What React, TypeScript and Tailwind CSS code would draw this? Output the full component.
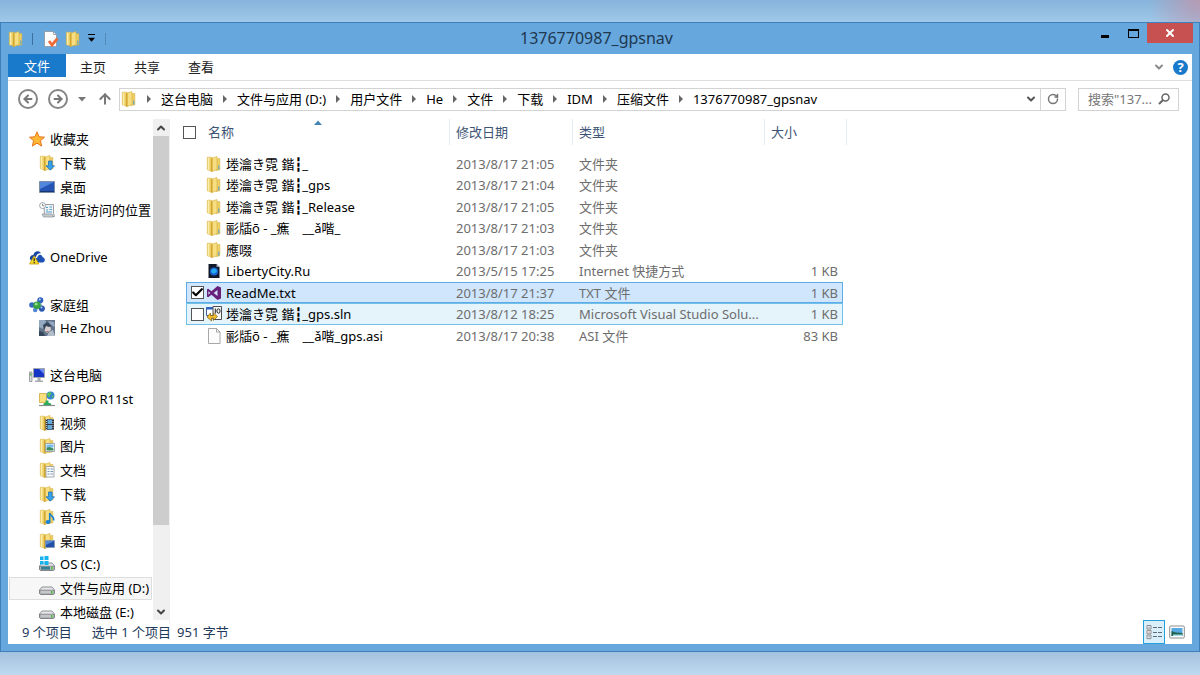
import type { ReactNode } from "react";
import { ArrowLeft, ArrowRight, ArrowUp, Check, ChevronDown, ChevronUp, RotateCw, X } from "lucide-react";

type IconName =
  | "star" | "download" | "desktop" | "recent" | "onedrive" | "homegroup" | "avatar" | "computer" | "phone"
  | "video" | "picture" | "document" | "music" | "desktopFolder" | "osDrive" | "drive" | "folder"
  | "link" | "vs" | "sln" | "file" | "properties";

// null leaves an empty line between groups
const sidebar: ({ label: string; icon: IconName; root?: boolean; active?: boolean } | null)[] = [
  { label: "收藏夹", icon: "star", root: true },
  { label: "下载", icon: "download" },
  { label: "桌面", icon: "desktop" },
  { label: "最近访问的位置", icon: "recent" },
  null,
  { label: "OneDrive", icon: "onedrive", root: true },
  null,
  { label: "家庭组", icon: "homegroup", root: true },
  { label: "He Zhou", icon: "avatar" },
  null,
  { label: "这台电脑", icon: "computer", root: true },
  { label: "OPPO R11st", icon: "phone" },
  { label: "视频", icon: "video" },
  { label: "图片", icon: "picture" },
  { label: "文档", icon: "document" },
  { label: "下载", icon: "download" },
  { label: "音乐", icon: "music" },
  { label: "桌面", icon: "desktopFolder" },
  { label: "OS (C:)", icon: "osDrive" },
  { label: "文件与应用 (D:)", icon: "drive", active: true },
  { label: "本地磁盘 (E:)", icon: "drive" },
];

const files: { name: string; date: string; type: string; size?: string; icon: IconName; state?: "selected" | "hover" }[] = [
  { name: "堘瀹き霓 鍇┇_", date: "2013/8/17 21:05", type: "文件夹", icon: "folder" },
  { name: "堘瀹き霓 鍇┇_gps", date: "2013/8/17 21:04", type: "文件夹", icon: "folder" },
  { name: "堘瀹き霓 鍇┇_Release", date: "2013/8/17 21:05", type: "文件夹", icon: "folder" },
  { name: "彨牐ō - _癄　__ǎ喈_", date: "2013/8/17 21:03", type: "文件夹", icon: "folder" },
  { name: "應啜", date: "2013/8/17 21:03", type: "文件夹", icon: "folder" },
  { name: "LibertyCity.Ru", date: "2013/5/15 17:25", type: "Internet 快捷方式", size: "1 KB", icon: "link" },
  { name: "ReadMe.txt", date: "2013/8/17 21:37", type: "TXT 文件", size: "1 KB", icon: "vs", state: "selected" },
  { name: "堘瀹き霓 鍇┇_gps.sln", date: "2013/8/12 18:25", type: "Microsoft Visual Studio Solu...", size: "1 KB", icon: "sln", state: "hover" },
  { name: "彨牐ō - _癄　__ǎ喈_gps.asi", date: "2013/8/17 20:38", type: "ASI 文件", size: "83 KB", icon: "file" },
];

const crumbs = ["这台电脑", "文件与应用 (D:)", "用户文件", "He", "文件", "下载", "IDM", "压缩文件", "1376770987_gpsnav"];

function FolderShape() {
  return (
    <>
      <path d="M1.3 1.2h4.2l1 1v12l-1.2.6-4-1z" fill="#f4da78" stroke="#d9b548" strokeWidth=".6" />
      <path d="M10 3l3.8-.6v11.4l-3.8.6z" fill="#efce62" stroke="#d5ae3e" strokeWidth=".6" />
      <path d="M5 2.4L11 .5v13.3l-6 1.9z" fill="#f7de82" stroke="#d5ae3e" strokeWidth=".6" />
      <path d="M5 2.4l1.6-.5v13.3L5 15.700z" fill="#d3a630" />
      <path d="M2.5 1.6v12.3" stroke="#fbecb0" />
    </>
  );
}

function DriveShape() {
  return (
    <>
      <path d="M3 7h10l2.5 3v3.5l-1 1h-13l-1-1V10z" fill="#e8e8ea" stroke="#77797d" strokeWidth=".8" />
      <path d="M.8 10.2h14.4v3.2l-.8.8H1.6l-.8-.8z" fill="#c4c6ca" stroke="#696b70" strokeWidth=".7" />
      <path d="M12 11h1.5v2.4H12z" fill="#43c32f" />
    </>
  );
}

const drawings: Record<IconName, ReactNode> = {
  folder: (
    <>
      <FolderShape />
      <path d="M12.8 9.5v4" stroke="#4aa3dd" />
    </>
  ),
  star: <path d="M8 .8l2.1 5 5.4.4-4.1 3.5 1.3 5.4L8 12.2l-4.7 2.9 1.3-5.4L.5 6.2l5.4-.4z" fill="#fdb935" stroke="#e8731c" />,
  download: (
    <>
      <FolderShape />
      <path d="M9.5 6h3.6v4.8h2.4l-4.2 4.4L7 10.8h2.5z" fill="#37a3ec" stroke="#1568ae" strokeWidth=".7" />
    </>
  ),
  desktop: (
    <>
      <path d="M.5 2.5h15v11H.5z" fill="#2554b5" stroke="#7c8eaa" />
      <path d="M1 3h14L1 10z" fill="#5286dc" />
      <path d="M1 12.5h14" stroke="#17356f" />
    </>
  ),
  recent: (
    <>
      <path d="M5 2.5h9.5v8.5l1 3.5H5.5z" fill="#f0f2f4" stroke="#83898f" strokeWidth=".8" />
      <path d="M3 12h10l1.5 3h-10z" fill="#c5ccd2" stroke="#7e858b" strokeWidth=".6" />
      <path d="M7 5.5h2M7 8h2M10.5 5h2.5M10.5 7.5h2.5M7 10h6" stroke="#4ba0cf" />
      <circle cx="3.6" cy="3.6" r="3" fill="#fff" stroke="#8a9196" strokeWidth=".8" />
      <path d="M3.6 1.8v2h1.6" fill="none" stroke="#555" strokeWidth=".7" />
    </>
  ),
  onedrive: (
    <>
      <path d="M2 11.5C-.6 9 1.6 5.8 4.3 6 5.2 2.2 9.6.8 12 4.3c-3-.5-4.7 1.8-5 3.6-2 .2-3 1.6-2.8 3.6z" fill="#1746a2" />
      <path d="M6.5 13.5C4.8 11 6.4 8.7 8.2 8.8 9 4.8 13.2 5 13.6 8.3c3 .4 3 5.2-.4 5.2z" fill="#1c50b4" />
      <path d="M5.2 6.8L.6 15h9.2z" fill="#fbdc2b" stroke="#c49d00" strokeWidth=".8" />
      <path d="M5.2 9.2v3M5.2 13v1.2" stroke="#222" strokeWidth="1.2" />
    </>
  ),
  homegroup: (
    <>
      <path d="M3 9l8-5.5L13 12z" fill="none" stroke="#9bb8da" strokeWidth="1.5" />
      <circle cx="11.3" cy="3.3" r="3" fill="#2f62bd" />
      <circle cx="3" cy="8" r="2.8" fill="#3569bf" />
      <circle cx="12.8" cy="11.6" r="3.1" fill="#2a59b0" />
      <circle cx="6.2" cy="13" r="2.3" fill="#5288d4" />
      <circle cx="8" cy="8.2" r="3.8" fill="#36a340" />
      <circle cx="7.2" cy="7.2" r="1.4" fill="#98df8e" />
      <circle cx="10.8" cy="2.5" r="1" fill="#bdd8fa" />
      <circle cx="12.5" cy="10.6" r="1" fill="#a9caf5" />
    </>
  ),
  avatar: (
    <>
      <path d="M0 0h16v16H0z" fill="#63758a" />
      <path d="M0 0h6l2 4-4 5-4-2zM9 1l6 1 1 5-4-2z" fill="#93a9c0" />
      <path d="M5 6l6-1 1 5-4 3-3-3z" fill="#d5cdd0" />
      <path d="M4 5l4-3 5 4-3 1-3-1-2 5zM0 11l4 1 2 4H0z" fill="#36475d" />
      <path d="M10 12l4-2 2 6H8z" fill="#b2bdca" />
      <path d="M7.5 11h2v1h-2z" fill="#b46464" />
    </>
  ),
  computer: (
    <>
      <path d="M4.5 1.5h11v9h-11z" fill="#1536c4" stroke="#a3a7ad" />
      <path d="M10 2h5v5z" fill="#6d8df0" />
      <path d="M8.5 11h3v2.5H14V15H6v-1.5h2.5z" fill="#a8abb2" />
      <path d="M.5 5H3v9.5H.5z" fill="#d8dadd" stroke="#7d8086" strokeWidth=".7" />
      <path d="M1 6.5h1.5v2H1z" fill="#4bb74b" />
    </>
  ),
  phone: (
    <>
      <path d="M.5 2.5h7v9h-7z" fill="#f9e07e" stroke="#d0a93d" strokeWidth=".8" />
      <circle cx="11.5" cy="4.5" r="4" fill="#3784cf" />
      <path d="M9 2c2-1.5 4-.5 3 1s-2 1-1 3c-2 0-4-2-2-4zM13 4.5l2 .5-1.5 2.5z" fill="#62c84d" />
      <path d="M6.5 9.5h3V12h2l1 2.5H4L5 12h1.5z" fill="#27ad57" />
      <path d="M0 14.5h16" stroke="#838d8a" strokeWidth="1.2" />
    </>
  ),
  video: (
    <>
      <FolderShape />
      <path d="M6.5 4H15v11H6.5z" fill="#30363d" />
      <path d="M8.5 4.5H13V9H8.5zM8.5 10H13v4.5H8.5z" fill="#67a9d8" />
      <path d="M7.5 4v11M14 4v11" stroke="#e8e8e8" strokeWidth=".8" strokeDasharray="1 1" />
    </>
  ),
  picture: (
    <>
      <FolderShape />
      <path d="M6.5 5.5h9v8h-9z" fill="#fff" stroke="#8b959d" strokeWidth=".8" />
      <path d="M7.5 6.5h7v3h-7z" fill="#76bce9" />
      <path d="M7.5 9.5l3-.5 4 1.5v2h-7z" fill="#3d8a64" />
    </>
  ),
  document: (
    <>
      <FolderShape />
      <path d="M7 4.5h8V15H7z" fill="#f9fafb" stroke="#8f979e" strokeWidth=".8" />
      <path d="M8.5 7h2M8.5 9.5h2M8.5 12h2M11.5 7H14M11.5 9.5H14M11.5 12H14" stroke="#698dad" strokeWidth=".9" />
    </>
  ),
  music: (
    <>
      <FolderShape />
      <path d="M10.7 4.5c.5 2.5 4.6 2.5 4 7" fill="none" stroke="#1a84d0" strokeWidth="1.6" />
      <path d="M10.7 4v9" stroke="#1a84d0" strokeWidth="1.6" />
      <ellipse cx="9" cy="13" rx="2.5" ry="2" fill="#1a84d0" />
    </>
  ),
  desktopFolder: (
    <>
      <FolderShape />
      <path d="M6.5 7.5h9v7h-9z" fill="#234fa6" stroke="#879ab4" strokeWidth=".8" />
      <path d="M7 8h8l-8 4z" fill="#5588d6" />
    </>
  ),
  osDrive: (
    <>
      <DriveShape />
      <path d="M2 10.6h9v3H2z" fill="#337e92" />
      <path d="M1 .5h3.5V4H1zM5.5 0h4v4h-4zM1 5h3.5v3.5H1zM5.5 5h4v4h-4z" fill="#17b5ef" />
    </>
  ),
  drive: <DriveShape />,
  link: (
    <>
      <path d="M2.5 1h8l3 3v11h-11z" fill="#11182a" />
      <path d="M10.5 1v3h3z" fill="#a2abbd" />
      <circle cx="8" cy="8.5" r="4" fill="#1664d6" />
      <path d="M5 8c2-3.5 5-3 6 0-1 2-3 3-5 2z" fill="#26a9ee" />
    </>
  ),
  vs: (
    <path
      d="M11.5 1L15 2.5v11L11.5 15l-6-5.3-3.3 2.6-1.2-.6V4.3l1.2-.6 3.3 2.600zM11.5 5L7.700 8l3.800 3zM2.400 6.200v3.600L4.200 8z"
      fill="#68217a"
      fillRule="evenodd"
    />
  ),
  sln: (
    <>
      <path d="M.5 1.5h9v8h-9z" fill="#fff" stroke="#44629b" />
      <path d="M.5 1h9v2.5h-9z" fill="#2d62c4" />
      <path d="M7 .5h8.5v13H7z" fill="#f7f7f7" stroke="#4d4d4d" />
      <path d="M9.3 2.5v5" stroke="#222" />
      <ellipse cx="12.5" cy="5" rx="1.6" ry="2.2" fill="none" stroke="#222" />
      <path d="M1 11l3.5-4v2.5h3V7l4 3.500-4 4V12h-2v3z" fill="#f5c02e" stroke="#7c5b15" strokeWidth=".7" />
    </>
  ),
  file: (
    <>
      <path d="M2.5.5h8L14 4v11.5H2.5z" fill="#fcfcfc" stroke="#929292" strokeWidth=".8" />
      <path d="M10.5.5V4H14" fill="none" stroke="#929292" strokeWidth=".8" />
    </>
  ),
  properties: (
    <>
      <path d="M1.5.5h9l3 3v12h-12z" fill="#fdfdfd" stroke="#8d949b" strokeWidth=".8" />
      <path d="M10.5.5v3h3" fill="none" stroke="#8d949b" strokeWidth=".8" />
      <path d="M6 10l3 4 5.5-6.5" fill="none" stroke="#ee6b38" strokeWidth="2.8" />
    </>
  ),
};

function Icon({ name }: { name: IconName }) {
  return (
    <svg viewBox="0 0 16 16" className="size-4 shrink-0" aria-hidden="true">
      {drawings[name]}
    </svg>
  );
}

function Triangle({ className }: { className: string }) {
  return (
    <svg viewBox="0 0 8 8" className={className} aria-hidden="true">
      <path d="M0 2h8L4 6.5z" fill="currentColor" />
    </svg>
  );
}

function Checkbox({ label, checked }: { label: string; checked?: boolean }) {
  return (
    <label className="relative block size-[13px] shrink-0">
      <input
        type="checkbox"
        aria-label={label}
        defaultChecked={checked}
        className="peer block size-[13px] appearance-none border border-[#555] bg-white"
      />
      <Check className="pointer-events-none absolute inset-0 hidden size-[13px] text-black peer-checked:block" strokeWidth={4} />
    </label>
  );
}

function TitleBar() {
  return (
    <header className="grid h-[31px] grid-cols-[1fr_auto_1fr]">
      <div className="flex items-center pl-[7px]">
        <Icon name="folder" />
        <span className="ml-2 h-3 w-px bg-[#3c6f9f]" />
        <button aria-label="属性" className="ml-[10px]"><Icon name="properties" /></button>
        <button aria-label="新建文件夹" className="ml-[6px]"><Icon name="folder" /></button>
        <button aria-label="自定义快速访问工具栏" className="ml-[7px] flex flex-col items-center text-black">
          <span className="h-px w-[7px] bg-black" />
          <Triangle className="mt-px size-[7px]" />
        </button>
        <span className="ml-[10px] h-3 w-px bg-[#5488b8]" />
      </div>
      <h1 className="pr-[7px] text-base leading-[30px] text-[#20384e]">1376770987_gpsnav</h1>
      <div className="flex items-start justify-end pr-[6px]">
        <button aria-label="最小化" className="flex h-5 w-7 items-center justify-center">
          <span className="mt-[6px] h-[3px] w-2 bg-black" />
        </button>
        <button aria-label="最大化" className="flex h-5 w-7 items-center justify-center">
          <span className="h-[9px] w-[11px] border border-t-2 border-black" />
        </button>
        <button aria-label="关闭" className="flex h-5 w-[46px] items-center justify-center bg-[#c75050] text-white">
          <X className="size-3" strokeWidth={4} />
        </button>
      </div>
    </header>
  );
}

function Ribbon() {
  return (
    <div className="flex h-[27px] items-start border-b border-[#dcdde0]">
      <button className="h-[23px] w-[58px] bg-[#1979ca] text-white">文件</button>
      {["主页", "共享", "查看"].map((tab) => (
        <button key={tab} className="h-[26px] w-[54px] text-[#222]">{tab}</button>
      ))}
      <div className="ml-auto flex h-[26px] items-center gap-2 pr-1">
        <button aria-label="展开功能区"><ChevronDown className="size-3 text-[#8b8b8b]" strokeWidth={4} /></button>
        <button aria-label="帮助" className="size-[15px] rounded-full bg-[#1979ca] text-[13px] leading-[15px] font-bold text-white">?</button>
      </div>
    </div>
  );
}

function AddressBar() {
  return (
    <div className="flex h-[38px] items-center pr-[13px] pb-[2px] pl-[10px] text-[#777]">
      <button aria-label="后退" className="flex size-5 items-center justify-center rounded-full border-2 border-[#858585]">
        <ArrowLeft className="size-3" strokeWidth={4} />
      </button>
      <button aria-label="前进" className="ml-[10px] flex size-5 items-center justify-center rounded-full border-2 border-[#858585]">
        <ArrowRight className="size-3" strokeWidth={4} />
      </button>
      <button aria-label="最近的位置" className="ml-[10px]"><Triangle className="size-2" /></button>
      <button aria-label="上移" className="ml-[11px]"><ArrowUp className="size-4" strokeWidth={3} /></button>
      <nav aria-label="地址" className="ml-[6px] flex h-[23px] flex-1 items-center border border-[#d3d3d3] pl-px text-black">
        <Icon name="folder" />
        {crumbs.map((crumb) => (
          <span key={crumb} className="flex items-center whitespace-nowrap">
            <svg viewBox="0 0 24 8" className="h-2 w-6 text-[#666]" aria-hidden="true">
              <path d="M10 0l4 4-4 4z" fill="currentColor" />
            </svg>
            <button>{crumb}</button>
          </span>
        ))}
        <button aria-label="以前的位置" className="ml-auto flex w-[18px] justify-center"><ChevronDown className="size-3 text-[#555]" strokeWidth={4} /></button>
        <button aria-label="刷新" className="flex h-full w-[25px] items-center justify-center border-l border-[#d3d3d3]">
          <RotateCw className="size-3 text-[#777]" strokeWidth={3} />
        </button>
      </nav>
      <div className="ml-3 flex h-[23px] w-[101px] items-center border border-[#d3d3d3] pr-2 pl-[9px]">
        <input aria-label="搜索" placeholder={'搜索"137...'} className="w-full min-w-0 bg-transparent outline-none placeholder:text-[#777]" />
        <svg viewBox="0 0 12 12" className="size-3 shrink-0" fill="none" stroke="#666" aria-hidden="true">
          <circle cx="7.5" cy="4.5" r="3.5" strokeWidth="1.5" />
          <path d="M5 7l-4 4" strokeWidth="2" />
        </svg>
      </div>
    </div>
  );
}

function Sidebar() {
  return (
    <aside className="flex w-[162px] shrink-0 border-r border-[#f0f0f0]">
      <ul className="grid min-w-0 flex-1 auto-rows-fr pt-[9px] pr-px pl-px">
        {sidebar.map((item, i) =>
          item ? (
            <li key={i} className="min-h-0">
              <a
                href="#"
                className={`flex h-full items-center gap-[5px] border pb-px whitespace-nowrap text-black ${item.root ? "pl-[19px]" : "pl-[29px]"} ${item.active ? "border-[#dedede] bg-[#f7f7f7]" : "border-transparent"}`}
              >
                <Icon name={item.icon} />
                {item.label}
              </a>
            </li>
          ) : (
            <li key={i} aria-hidden="true" />
          ),
        )}
      </ul>
      <div className="mb-1 flex w-4 flex-col bg-[#f0f0f0] text-[#444]">
        <button aria-label="向上滚动" className="flex h-[17px] items-center justify-center"><ChevronUp className="size-3" strokeWidth={4} /></button>
        <div className="flex-[389] bg-[#cdcdcd]" />
        <div className="flex-[79]" />
        <button aria-label="向下滚动" className="flex h-4 items-center justify-center"><ChevronDown className="size-3" strokeWidth={4} /></button>
      </div>
    </aside>
  );
}

const rowStyles = {
  selected: "border-[#5eabe8] bg-[#cfe6fd]",
  hover: "border-[#70c0e7] bg-[#e5f3fb]",
  plain: "border-transparent",
};

function FileTable() {
  return (
    <table className="w-[661px] table-fixed border-separate border-spacing-0 text-left">
      <colgroup>
        <col className="w-[264px]" />
        <col className="w-[123px]" />
        <col className="w-[192px]" />
        <col className="w-[78px]" />
        <col className="w-1" />
      </colgroup>
      <thead>
        <tr className="h-[26px] text-[#3d5475]">
          <th className="relative border-r border-[#e3edf6] p-0 font-normal">
            <Triangle className="absolute top-0 left-1/2 size-2 -translate-x-1/2 rotate-180 text-[#4586b0]" />
            <div className="-ml-[3px] flex items-center gap-3">
              <Checkbox label="全选" />
              名称
            </div>
          </th>
          <th className="border-r border-[#e3edf6] p-0 pl-[6px] font-normal">修改日期</th>
          <th className="border-r border-[#e3edf6] p-0 pl-[6px] font-normal">类型</th>
          <th className="p-0 pl-[6px] font-normal">大小</th>
          <td className="border-r border-[#e3edf6] p-0" />
        </tr>
        <tr className="h-2"><td colSpan={5} className="p-0" /></tr>
      </thead>
      <tbody className="text-[#6d6d6d]">
        {files.map((file) => {
          const cell = rowStyles[file.state ?? "plain"];
          return (
            <tr key={file.name} className="odd:h-[21px] even:h-[22px]">
              <td className={`border-y border-l p-0 ${cell}`}>
                <div className="flex items-center whitespace-pre text-black">
                  <span className="flex w-[19px] pl-1">
                    {file.state && <Checkbox label={file.name} checked={file.state === "selected"} />}
                  </span>
                  <Icon name={file.icon} />
                  <span className="ml-1 h-[18px]">{file.name}</span>
                </div>
              </td>
              <td className={`border-y p-0 pl-[6px] ${cell}`}>{file.date}</td>
              <td className={`truncate border-y p-0 pl-[6px] ${cell}`}>{file.type}</td>
              <td className={`border-y border-r p-0 pr-1 text-right ${cell}`}>{file.size}</td>
              <td className="p-0" />
            </tr>
          );
        })}
      </tbody>
    </table>
  );
}

function StatusBar() {
  return (
    <footer className="flex h-5 items-end pl-[14px] text-[#1e395b]">
      <span className="leading-6">9 个项目</span>
      <span className="ml-5 leading-6">选中 1 个项目</span>
      <span className="ml-[6px] leading-6">951 字节</span>
      <div className="mr-[7px] ml-auto flex items-center gap-1">
        <button aria-label="详细信息" className="border border-[#26a0da] bg-[#d9effa] px-px py-[2px]">
          <svg viewBox="0 0 18 18" className="size-[18px]" aria-hidden="true">
            <path d="M2 2.5h4V6H2zM2 7.3h4v3.500H2zM2 12.100h4v3.500H2z" fill="#fff" stroke="#8c8c8c" />
            <path d="M3.5 4.2h1.200M3.5 13.800h1.200" stroke="#3668a8" />
            <path d="M3.5 9h1.200" stroke="#d63e3e" />
            <path d="M8 4.5h4M13 4.5h4M8 9.5h4M13 9.5h4M8 13.5h4M13 13.5h4" stroke="#606d76" />
          </svg>
        </button>
        <button aria-label="大缩略图">
          <svg viewBox="0 0 16 14" className="h-[14px] w-4" aria-hidden="true">
            <rect x=".7" y="1" width="14.6" height="12" rx="1" fill="#fff" stroke="#8d8d8d" />
            <path d="M2.5 3h11v8h-11z" fill="#56a9e2" />
            <path d="M2.5 6l4 1.500 7 .5v3h-11z" fill="#21624b" />
            <path d="M4 9.5h9.500V11H4z" fill="#a7dceb" />
          </svg>
        </button>
      </div>
    </footer>
  );
}

export default function App() {
  return (
    <div className="flex min-h-screen flex-col bg-[radial-gradient(circle_at_100%_0,#b79bb4_0,#b79bb400_52px),linear-gradient(#86b4dc_0,#a0c8e8_22px,#a4c2de_652px,#bfd9ef_100%)] pt-[22px] pb-[23px] font-['Noto_Sans','DejaVu_Sans_Mono','Noto_Sans_CJK_SC',sans-serif] text-[13px] leading-[18px]">
      <div className="flex flex-1 flex-col border border-[#3d80bc] bg-[#66a7de]">
        <TitleBar />
        <div className="mx-[7px] mb-[7px] flex flex-1 flex-col bg-white">
          <Ribbon />
          <AddressBar />
          <div className="flex flex-1">
            <Sidebar />
            <main className="min-w-0 flex-1 pl-4">
              <FileTable />
            </main>
          </div>
          <StatusBar />
        </div>
      </div>
    </div>
  );
}
